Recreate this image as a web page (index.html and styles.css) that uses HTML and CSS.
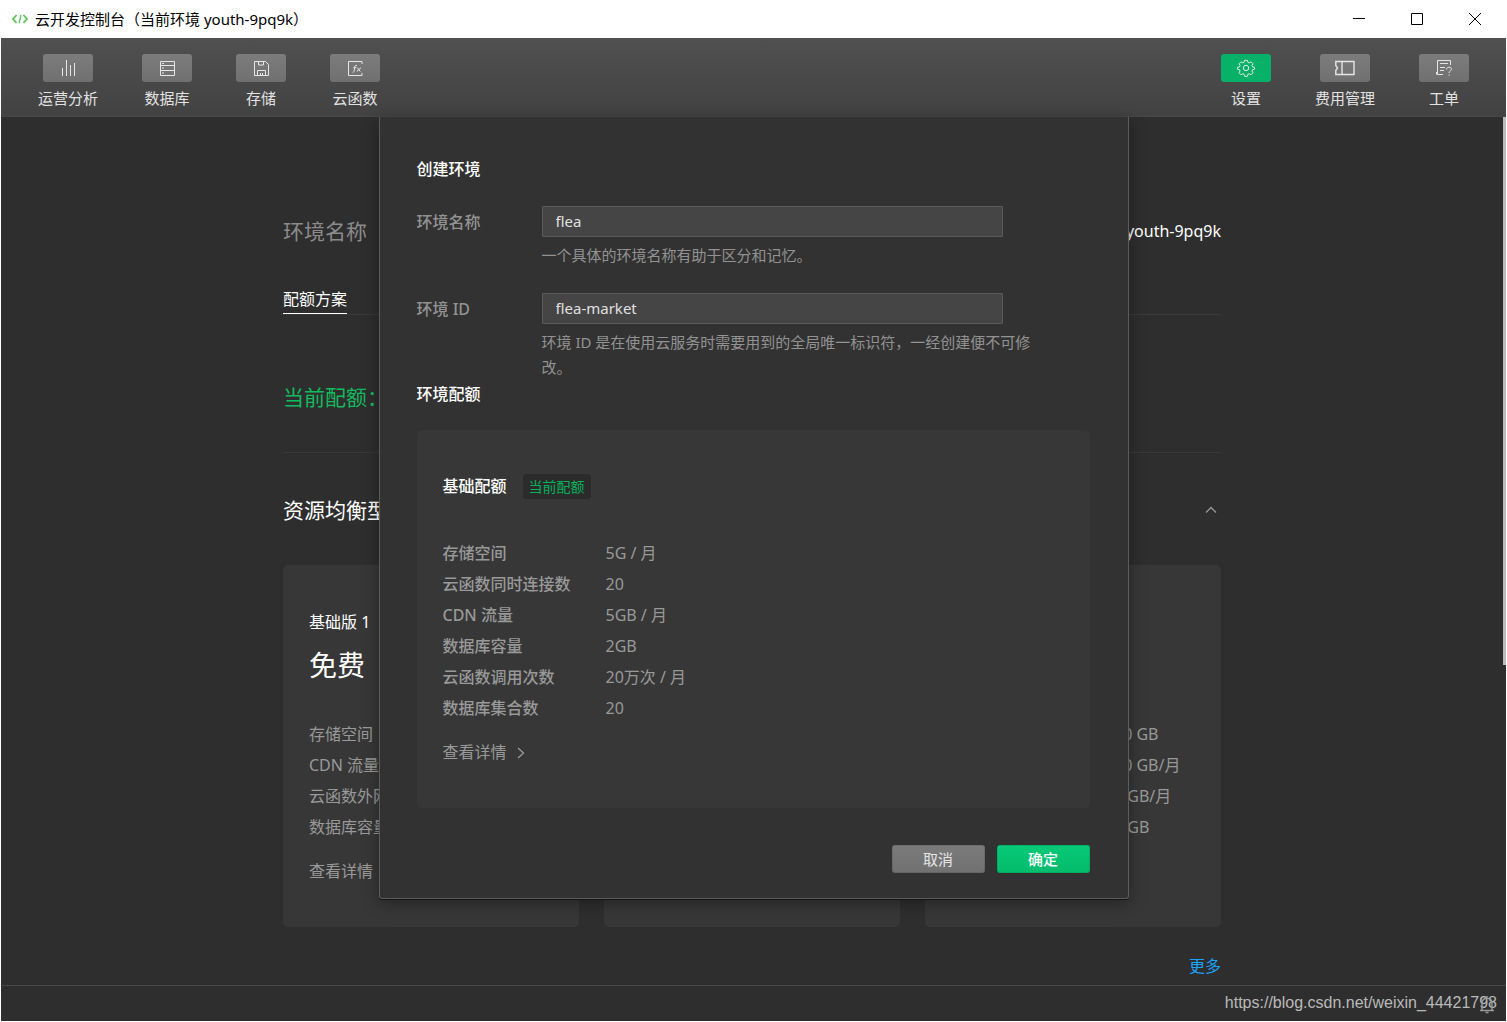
FILE: index.html
```html
<!DOCTYPE html>
<html lang="zh-CN">
<head>
<meta charset="utf-8">
<title>云开发控制台</title>
<link rel="stylesheet" href="styles.css">
</head>
<body>
<header class="titlebar">
  <svg class="logo" width="16" height="10" viewBox="0 0 16 10" fill="none" stroke="#5cc455" stroke-width="1.8"><path d="M4.6 1 1 5l3.600 4M11.400 1 15 5l-3.600 4"/><path d="M8.900 1 7.200 9" stroke-width="1.300"/></svg>
  <span class="window-title">云开发控制台（当前环境 youth-9pq9k）</span>
  <div class="window-controls">
    <button class="window-btn" aria-label="最小化"><svg width="12" height="12" viewBox="0 0 12 12" stroke="#000" fill="none"><path d="M0 5.500h12"/></svg></button>
    <button class="window-btn" aria-label="最大化"><svg width="12" height="12" viewBox="0 0 12 12" stroke="#000" fill="none"><path d="M.5.5h11v11H.5z"/></svg></button>
    <button class="window-btn" aria-label="关闭"><svg width="12" height="12" viewBox="0 0 12 12" stroke="#000" fill="none"><path d="m0 0 12 12M12 0 0 12"/></svg></button>
  </div>
</header>

<nav class="toolbar">
  <div class="tools">
    <button class="tool"><span class="tool-icon"><svg width="16" height="16" viewBox="0 0 16 16"><path d="M2.500 8v8M6.500 0v16M10.500 5v11M14.500 3v13"/></svg></span>运营分析</button>
    <button class="tool"><span class="tool-icon"><svg width="16" height="16" viewBox="0 0 16 16"><path d="M1.500 1.500h14v14h-14zM1.500 5.500h14M1.500 10.500h14M3 3.500h2M3 8h2M3 13h2"/></svg></span>数据库</button>
    <button class="tool"><span class="tool-icon"><svg width="16" height="16" viewBox="0 0 16 16"><path d="M1.500 1.500h11l3 3v11h-14zM5.500 1.500V5h5V1.500M4.500 15.500V10.500h8v5M7.500 13v2.500M9.500 13v2.500"/></svg></span>存储</button>
    <button class="tool"><span class="tool-icon"><svg width="16" height="16" viewBox="0 0 16 16"><path d="M15 4V1.500H1.500v14H15V13"/><path d="M10 5.500c-1.500-.6-2 .3-2.200 1.500L7 11.200c-.2 1-.6 1.300-1.300 1.100M6.300 7.700h3M10.300 7.700l3 3.800M14 7.700l-4.300 3.800"/></svg></span>云函数</button>
  </div>
  <div class="tools">
    <button class="tool active"><span class="tool-icon"><svg width="18" height="18" viewBox="0 0 18 18"><circle cx="9" cy="9" r="2.700"/><path d="M7.600 1.300h2.800l.5 2 1.300.6 1.800-1.100 2 2-1.100 1.800.6 1.300 2 .5v1.800l-2 .5-.6 1.300 1.100 1.800-2 2-1.800-1.100-1.300.6-.5 2H7.600l-.5-2-1.300-.6L4 15.800l-2-2L3.100 12l-.6-1.300-2-.5V8.400l2-.5.6-1.300L2 4.800l2-2 1.800 1.100 1.300-.6z"/></svg></span>设置</button>
    <button class="tool"><span class="tool-icon"><svg width="20" height="16" viewBox="0 0 20 16"><path d="M.8 1.500H19v13H.8v-4L2.500 8 .8 5.500zM7 1.500v13" stroke-width="1.400"/></svg></span>费用管理</button>
    <button class="tool"><span class="tool-icon"><svg width="18" height="18" viewBox="0 0 18 18"><path d="M15.500 6V1.500h-13v14H8M5 4.500h8M5 8.500h5M5 11.500h4M1.500 15.500v-2.500M11.500 10.500c0-3 5-3 5-.3 0 1.800-2.500 1.800-2.500 3.800M14 15.500v1.200"/></svg></span>工单</button>
  </div>
</nav>

<main class="workspace">
  <div class="content">
    <div class="env-row"><h1 class="heading muted">环境名称</h1><span class="env-id">youth-9pq9k</span></div>
    <nav class="tabs"><a class="tab" href="#plan">配额方案</a></nav>
    <section class="current"><h2 class="heading">当前配额：</h2></section>
    <section class="group" id="plan">
      <div class="group-head"><h2 class="heading">资源均衡型</h2>
        <button class="collapse" aria-label="收起"><svg width="12" height="8" viewBox="0 0 12 8" fill="none" stroke="#999" stroke-width="1.300"><path d="m1 6.500 5-5 5 5"/></svg></button></div>
      <div class="cards">
        <article class="card">
          <h3 class="plan-name">基础版 1</h3>
          <p class="price">免费</p>
          <ul class="features"><li>存储空间</li><li>CDN 流量</li><li>云函数外网</li><li>数据库容量</li></ul>
          <a class="details" href="#basic">查看详情</a>
        </article>
        <article class="card"></article>
        <article class="card values">
          <ul class="features"><li>10 GB</li><li>10 GB/月</li><li>5 GB/月</li><li>5 GB</li></ul>
        </article>
      </div>
      <a class="more" href="#more">更多</a>
    </section>
  </div>

  <form class="dialog" role="dialog" aria-labelledby="dialog-title">
    <h2 class="dialog-title" id="dialog-title">创建环境</h2>
    <div class="field">
      <label for="env-name">环境名称</label>
      <div><input id="env-name" type="text" value="flea"><p class="hint">一个具体的环境名称有助于区分和记忆。</p></div>
    </div>
    <div class="field">
      <label for="env-id">环境 ID</label>
      <div><input id="env-id" type="text" value="flea-market"><p class="hint">环境 ID 是在使用云服务时需要用到的全局唯一标识符，一经创建便不可修改。</p></div>
    </div>
    <h2 class="dialog-title">环境配额</h2>
    <section class="quota">
      <div class="quota-head"><h3>基础配额</h3><span class="tag">当前配额</span></div>
      <table>
        <tr><th scope="row">存储空间</th><td>5G / 月</td></tr>
        <tr><th scope="row">云函数同时连接数</th><td>20</td></tr>
        <tr><th scope="row">CDN 流量</th><td>5GB / 月</td></tr>
        <tr><th scope="row">数据库容量</th><td>2GB</td></tr>
        <tr><th scope="row">云函数调用次数</th><td>20万次 / 月</td></tr>
        <tr><th scope="row">数据库集合数</th><td>20</td></tr>
      </table>
      <a class="details" href="#quota">查看详情<svg width="8" height="12" viewBox="0 0 8 12" fill="none" stroke="#999" stroke-width="1.300"><path d="m1 1 5.500 5L1 11"/></svg></a>
    </section>
    <div class="actions"><button class="btn" type="button">取消</button><button class="btn primary" type="button">确定</button></div>
  </form>
  <div class="scroll-thumb"></div>
</main>

<footer class="statusbar">
  <svg class="bell" width="16" height="18" viewBox="0 0 16 18" fill="none" stroke="#999" stroke-width="1.500"><path d="M8 0v2M3 14V7.500C3 4 5 2.200 8 2.200s5 1.800 5 5.300V14M1 14.500h14M6.500 16.500h3"/></svg>
  <span>https://blog.csdn.net/weixin_44421798</span>
</footer>
</body>
</html>
```
FILE: styles.css
```css
* { box-sizing: border-box; }
body {
  margin: 0;
  padding: 0 1px 1px;
  min-height: 100vh;
  display: flex;
  flex-direction: column;
  background: #fff;
  color: #fff;
  font-family: "Noto Sans", "Noto Sans CJK SC", sans-serif;
  font-size: 16px;
}
h1, h2, h3, p, ul { margin: 0; padding: 0; font-size: 16px; font-weight: 400; }
ul { list-style: none; }
button { border: 0; padding: 0; background: none; font: inherit; color: inherit; }
a { color: inherit; text-decoration: none; }
svg { display: block; flex: none; }

.titlebar {
  display: flex;
  align-items: center;
  height: 38px;
  padding: 0 2px 0 11px;
  color: #000;
  font-size: 15px;
}
.logo { margin-right: 7px; }
.window-title { line-height: 20px; }
.window-controls { display: flex; margin-left: auto; }
.window-btn { display: flex; width: 58px; height: 38px; align-items: center; justify-content: center; }

.toolbar {
  display: flex;
  justify-content: space-between;
  height: 79px;
  padding: 16px 37px 0;
  background: linear-gradient(#505050, #424242);
  border-bottom: 1px solid #484848;
}
.tools { display: flex; align-items: flex-start; gap: 44px; }
.tool {
  display: flex;
  flex-direction: column;
  align-items: center;
  gap: 4px;
  color: #e2e2e2;
  font-size: 15px;
  line-height: 24px;
}
.tool-icon {
  display: flex;
  align-items: center;
  justify-content: center;
  width: 50px;
  height: 28px;
  border-radius: 3px;
  background: linear-gradient(#7c7c7c, #707070);
}
.tool-icon svg { fill: none; stroke: #e6e6e6; }
.active .tool-icon { background: #07b268; }

.workspace { position: relative; flex: 1; padding: 0 3px 7px 0; background: #2e2e2e; }
.content { width: 938px; max-width: 100%; margin: 0 auto; padding-top: 96px; }
.heading { font-size: 21px; line-height: 36px; }
.muted { color: #8b8b8b; }
.env-row, .group-head { display: flex; justify-content: space-between; align-items: center; }
.tabs { display: flex; height: 30px; margin-top: 36px; border-bottom: 1px solid #393939; }
.tab { height: 29px; line-height: 28px; border-bottom: 1px solid #fff; }
.current { padding: 64px 0 37px; border-bottom: 1px solid #393939; color: #12bb5d; }
.group-head { padding: 39px 4px 37px 0; }
.cards { display: grid; grid-template-columns: repeat(3, 1fr); gap: 25px; }
.card { padding: 44px 26px 40px; border-radius: 5px; background: #373737; color: #999; }
.plan-name { color: #fff; line-height: 26px; }
.price { margin: 10px 0 34px; color: #fff; font-size: 28px; line-height: 40px; }
.features { line-height: 31px; white-space: nowrap; }
.values { padding: 154px 26px 40px 189px; }
.details { display: flex; align-items: center; gap: 10px; margin-top: 13px; line-height: 31px; color: #999; }
.more { display: block; width: max-content; margin: 27px 0 0 auto; line-height: 24px; color: #1aa3ff; }

.dialog {
  position: absolute;
  top: 0;
  left: 50%;
  width: 750px;
  transform: translateX(-50%);
  padding: 39px 38px 25px 37px;
  border: solid #5c5c5c;
  border-width: 0 1px 1px;
  border-radius: 0 0 3px 3px;
  background: #323232;
  box-shadow: 0 1px 0 #151515, 0 4px 16px rgba(0, 0, 0, .35);
}
.dialog-title { line-height: 26px; font-weight: 500; }
.field { display: grid; grid-template-columns: 125px 1fr; margin-bottom: 25px; color: #929292; }
.dialog-title + .field { margin-top: 24px; }
.field + .field { margin-bottom: 1px; }
.field label { line-height: 32px; font-weight: 500; }
.field input {
  display: block;
  width: 461px;
  max-width: 100%;
  height: 31px;
  padding: 0 13px 2px;
  border: 1px solid #5a5a5a;
  border-radius: 1px;
  background: #454545;
  color: #e0e0e0;
  font: inherit;
  font-size: 15px;
}
.hint { max-width: 500px; margin-top: 6px; font-size: 15px; line-height: 25px; }
.quota { margin-top: 23px; padding: 44px 26px 40px; border-radius: 5px; background: #373737; }
.quota-head { display: flex; align-items: flex-start; gap: 16px; height: 26px; margin-bottom: 38px; line-height: 25px; }
.quota-head h3 { font-weight: 500; }
.tag { padding: 0 6px; border-radius: 3px; background: #2b2b2b; color: #07b45a; font-size: 14px; }
table { border-collapse: collapse; color: #999; line-height: 31px; }
th, td { padding: 0; text-align: left; font-weight: 400; }
th { width: 163px; font-weight: 500; }
.actions { display: flex; justify-content: flex-end; gap: 12px; margin-top: 37px; }
.btn {
  width: 93px;
  height: 28px;
  border-radius: 3px;
  background: linear-gradient(#7b7b7b, #717171);
  box-shadow: inset 0 0 0 1px rgba(0, 0, 0, .1);
  color: #e5e5e5;
  font-size: 15px;
  line-height: 27px;
}
.primary { background: linear-gradient(#06c977, #04bb6c); color: #fff; font-weight: 500; }
.scroll-thumb { position: absolute; top: 0; right: 0; width: 3px; height: 548px; background: #bcbcbc; }

.statusbar {
  position: relative;
  display: flex;
  justify-content: flex-end;
  height: 36px;
  padding-right: 9px;
  border-top: 1px solid #484848;
  background: #2e2e2e;
  color: #bababa;
  font-family: "Liberation Sans", sans-serif;
  line-height: 34px;
}
.bell { position: absolute; right: 11px; top: 10px; }
```
